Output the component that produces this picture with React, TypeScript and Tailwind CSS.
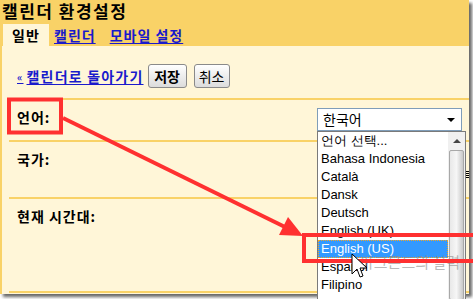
const ko = "font-['Noto_Sans_CJK_KR','Noto_Sans',sans-serif]";

const languages = [
  "언어 선택...",
  "Bahasa Indonesia",
  "Català",
  "Dansk",
  "Deutsch",
  "English (UK)",
  "English (US)",
  "Español",
  "Filipino",
];

function LanguageList() {
  return (
    <div className="absolute left-0 top-full z-10 flex h-[170px] w-[149px] border border-[#7a7a7a] bg-white">
      <ul className="flex-1">
        {languages.map((lang) => {
          const active = lang === "English (US)";
          return (
            <li
              key={lang}
              className={
                active
                  ? "flex h-[18px] items-center border border-dotted border-[#f5a623] bg-[#3399ff] pl-[2px] text-[13px] text-white"
                  : "flex h-[18px] items-center pl-[3px] text-[13px] text-black"
              }
            >
              {lang}
            </li>
          );
        })}
      </ul>
      <div className="flex w-[17px] flex-col bg-[#f0f0f0]">
        <div className="flex h-[18px] items-center justify-center">
          <span className="h-0 w-0 border-x-[4px] border-b-[4px] border-x-transparent border-b-[#444]" />
        </div>
        <div className="mx-[1px] flex-1 rounded-[2px] border border-[#a8a8a8] bg-gradient-to-r from-[#e8e8e8] via-[#f6f6f6] to-[#c8c8c8]" />
      </div>
    </div>
  );
}

function Row({ label, children, height }: { label: string; children?: React.ReactNode; height: string }) {
  return (
    <div className={`flex items-start justify-between border-t-2 border-[#f9d267] ${height}`}>
      <span className={`${ko} pl-[8px] pt-[8px] text-[14px] font-bold leading-[18px] tracking-[1px] text-black`}>{label}</span>
      {children}
    </div>
  );
}

export default function App() {
  return (
    <div className="relative h-[299px] w-[473px] overflow-hidden bg-white font-['Liberation_Sans',Arial,sans-serif]">
      <div className="flex h-[294px] w-[469px] flex-col bg-[#f9d267] shadow-[3px_3px_3px_rgba(0,0,0,0.6)]">
        <header className="h-[46px]">
          <h1 className={`${ko} h-[24px] pl-[2px] text-[17px] font-bold leading-[22px] tracking-[1.5px] text-black`}>
            캘린더 환경설정
          </h1>
          <nav className={`${ko} flex h-[22px] items-end text-[14px] font-bold tracking-[1px]`}>
            <span className="ml-[3px] flex h-[22px] w-[46px] items-center justify-center bg-[#fff6d8] text-black">일반</span>
            <a className="ml-[5px] self-center text-[#1a1acc] underline underline-offset-2">캘린더</a>
            <a className="ml-[14px] self-center text-[#1a1acc] underline underline-offset-2">모바일 설정</a>
          </nav>
        </header>

        <main className="flex flex-1 flex-col border-l-2 border-[#f9d267] bg-[#fff6d8]">
          <div className="flex h-[42px] items-end pl-[15px]">
            <a className={`${ko} mb-[1px] flex items-center text-[14px] font-bold tracking-[1.2px] text-[#1a1acc] underline underline-offset-2`}>
              <span className="mr-[3px] text-[10px]">«</span>캘린더로 돌아가기
            </a>
            <button className={`${ko} ml-[4px] h-[24px] w-[39px] rounded-[3px] border border-[#8a8a8a] bg-gradient-to-b from-white to-[#dcdcdc] text-[14px] font-bold text-black`}>
              저장
            </button>
            <button className={`${ko} ml-[7px] h-[24px] w-[36px] rounded-[3px] border border-[#8a8a8a] bg-gradient-to-b from-white to-[#dcdcdc] text-[14px] text-black`}>
              취소
            </button>
          </div>

          <div className="ml-[7px] mt-[10px] flex flex-1 flex-col">
            <Row label="언어:" height="h-[42px]">
              <div className="relative mr-[7px] mt-[8px]">
                <div className="flex h-[23px] w-[145px] items-center justify-between border border-[#7f9db9] bg-white pl-[5px] pr-[6px]">
                  <span className={`${ko} text-[14px] text-black`}>한국어</span>
                  <span className="h-0 w-0 border-x-[4px] border-t-[4px] border-x-transparent border-t-black" />
                </div>
                <LanguageList />
              </div>
            </Row>
            <Row label="국가:" height="h-[57px]" />
            <Row label="현재 시간대:" height="flex-1" />
            <div className="mb-[1px] h-[2px] bg-[#f9d267]" />
          </div>
        </main>
      </div>

      <div className="absolute left-[463px] top-[171px] flex w-[6px] flex-col gap-[1px]">
        <span className="h-[1px] bg-black" />
        <span className="h-[1px] bg-black" />
        <span className="h-[1px] bg-black" />
        <span className="h-[1px] bg-black" />
      </div>

      <span className={`${ko} pointer-events-none absolute left-[360px] top-[252px] z-20 whitespace-nowrap text-[15px] leading-[20px] text-[#8a8a8a]/60`}>
        아크몬드의 실력
      </span>

      <svg className="pointer-events-none absolute left-0 top-0 z-30" width="473" height="299">
        <rect x="9" y="99.5" width="52" height="33" fill="none" stroke="#ff3030" strokeWidth="4" />
        <rect x="304" y="235" width="180" height="26" fill="none" stroke="#ff3030" strokeWidth="4" />
        <line x1="63" y1="118" x2="285" y2="227" stroke="#ff3030" strokeWidth="4" />
        <polygon points="303,236 279,235 288,217" fill="#ff3030" />
        <path
          d="M352 254 L352 274 L357 269 L360 277 L363 276 L360 268 L367 268 Z"
          fill="white"
          stroke="black"
          strokeWidth="1"
        />
      </svg>
    </div>
  );
}
